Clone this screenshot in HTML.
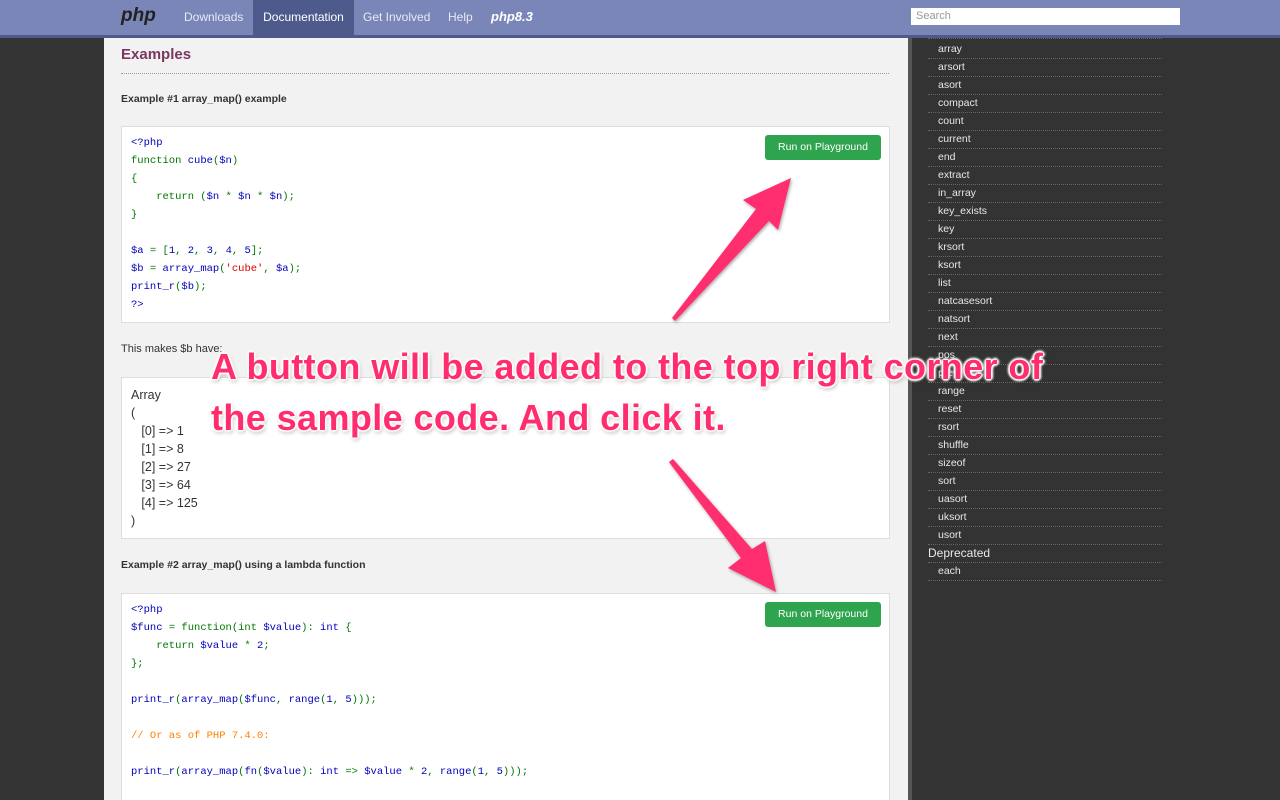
<!DOCTYPE html>
<html><head><meta charset="utf-8"><style>
*{margin:0;padding:0;box-sizing:border-box}
html,body{width:1280px;height:800px;overflow:hidden}
body{background:#333;font-family:"Liberation Sans",sans-serif;position:relative}
.hdr{position:absolute;left:0;top:0;width:1280px;height:38px;background:#7b86b8;border-bottom:3px solid #4e5a8c}
.nav{position:absolute;top:0;height:35px;line-height:34px;font-size:12px;color:#e8eaf4}
.main{position:absolute;left:104px;top:38px;width:804px;height:762px;background:#f2f2f2;overflow:hidden}
.side{position:absolute;left:908px;top:38px;width:4px;height:762px;background:#555}
.abs{position:absolute}
.box{position:absolute;left:121px;width:769px;background:#fff;border:1px solid #ddd}
.code{position:absolute;font-family:"Liberation Mono",monospace;font-size:10.5px;line-height:18px;white-space:pre;color:#0000bb}
.g{color:#007700}.r{color:#dd0000}.o{color:#ff8000}
.btn{position:absolute;left:765px;width:116px;height:25px;background:#2ea44f;border-radius:3px;color:#fff;font-size:10.5px;text-align:center;line-height:25px}
.sl{position:absolute;left:928px;width:234px;font-size:10.5px;color:#e8e8e8}
.sl div{height:18px;line-height:16px;padding-left:10px;border-bottom:1px dotted #666}
.ov{position:absolute;left:211px;font-weight:bold;font-size:36px;color:#ff2d6e;white-space:nowrap;letter-spacing:0.4px;
text-shadow:0 0 1px #fff,1px 0 1px #fff,-1px 0 1px #fff,0 1px 1px #fff,0 -1px 1px #fff,2px 0 2px #fff,-2px 0 2px #fff,0 2px 2px #fff,0 -2px 2px #fff,1px 2px 4px rgba(0,0,0,.45)}
</style></head><body>
<div class="hdr"></div>
<div class="nav" style="left:121px;font-size:19px;font-weight:bold;font-style:italic;color:#222;line-height:32px">php</div>
<div class="nav" style="left:184px">Downloads</div>
<div class="nav" style="left:253px;width:101px;background:#4e5a8c;color:#fff;text-align:center">Documentation</div>
<div class="nav" style="left:363px">Get Involved</div>
<div class="nav" style="left:448px">Help</div>
<div class="nav" style="left:491px;font-weight:bold;font-style:italic;color:#fff;font-size:13px">php8.3</div>
<div class="abs" style="left:911px;top:8px;width:269px;height:17px;background:#fff;font-size:11px;color:#999;line-height:17px;padding-left:5px">Search</div>
<div class="main">
<div class="box" style="left:17px;top:555px;height:230px"></div>
</div>
<div class="side"></div>
<div class="abs" style="left:121px;top:46px;font-size:15px;font-weight:bold;color:#793862">Examples</div>
<div class="abs" style="left:121px;top:73px;width:768px;border-top:1px dotted #999"></div>
<div class="abs" style="left:121px;top:93px;font-size:10.5px;font-weight:bold;color:#333">Example #1 array_map() example</div>
<div class="box" style="top:126px;height:197px"></div>
<div class="code" style="left:131px;top:134px">&lt;?php
<span class="g">function </span>cube<span class="g">(</span>$n<span class="g">)
{
    return (</span>$n <span class="g">* </span>$n <span class="g">* </span>$n<span class="g">);
}</span>

$a <span class="g">= [</span>1<span class="g">, </span>2<span class="g">, </span>3<span class="g">, </span>4<span class="g">, </span>5<span class="g">];</span>
$b <span class="g">= </span>array_map<span class="g">(</span><span class="r">'cube'</span><span class="g">, </span>$a<span class="g">);</span>
print_r<span class="g">(</span>$b<span class="g">);</span>
?&gt;</div>
<div class="btn" style="top:135px">Run on Playground</div>
<div class="abs" style="left:121px;top:343px;font-size:11px;color:#333">This makes $b have:</div>
<div class="box" style="top:377px;height:162px"></div>
<div class="abs" style="left:131px;top:386px;font-size:12.5px;line-height:18px;color:#333;white-space:pre">Array
(
   [0] =&gt; 1
   [1] =&gt; 8
   [2] =&gt; 27
   [3] =&gt; 64
   [4] =&gt; 125
)</div>
<div class="abs" style="left:121px;top:559px;font-size:10.5px;font-weight:bold;color:#333">Example #2 array_map() using a lambda function</div>
<div class="code" style="left:131px;top:601px">&lt;?php
$func <span class="g">= function(int </span>$value<span class="g">): </span>int <span class="g">{
    return </span>$value <span class="g">* </span>2<span class="g">;
};</span>

print_r<span class="g">(</span>array_map<span class="g">(</span>$func<span class="g">, </span>range<span class="g">(</span>1<span class="g">, </span>5<span class="g">)));</span>

<span class="o">// Or as of PHP 7.4.0:</span>

print_r<span class="g">(</span>array_map<span class="g">(</span>fn<span class="g">(</span>$value<span class="g">): </span>int <span class="g">=&gt; </span>$value <span class="g">* </span>2<span class="g">, </span>range<span class="g">(</span>1<span class="g">, </span>5<span class="g">)));</span></div>
<div class="btn" style="top:602px">Run on Playground</div>
<div class="sl" style="top:38px;border-top:1px dotted #666">
<div style="margin-top:2px">array</div><div>arsort</div><div>asort</div><div>compact</div><div>count</div><div>current</div><div>end</div><div>extract</div><div>in_array</div><div>key_exists</div><div>key</div><div>krsort</div><div>ksort</div><div>list</div><div>natcasesort</div><div>natsort</div><div>next</div><div>pos</div><div>prev</div><div>range</div><div>reset</div><div>rsort</div><div>shuffle</div><div>sizeof</div><div>sort</div><div>uasort</div><div>uksort</div><div>usort</div><div style="padding-left:0;font-size:12px">Deprecated</div><div>each</div>
</div>
<svg class="abs" style="left:0;top:0" width="1280" height="800">
<defs><filter id="s"><feDropShadow dx="1" dy="1.5" stdDeviation="1.5" flood-opacity=".35"/></filter></defs>
<g fill="#ff2d6e" filter="url(#s)">
<polygon points="672,318 675,321 769,221 778,230 791,178 743,200 756,209"/>
<polygon points="669,462 673,459 752,549 765,541 776,592 728,568 741,558"/>
</g>
</svg>
<div class="ov" style="top:346px">A button will be added to the top right corner of</div>
<div class="ov" style="top:397px">the sample code. And click it.</div>
</body></html>
